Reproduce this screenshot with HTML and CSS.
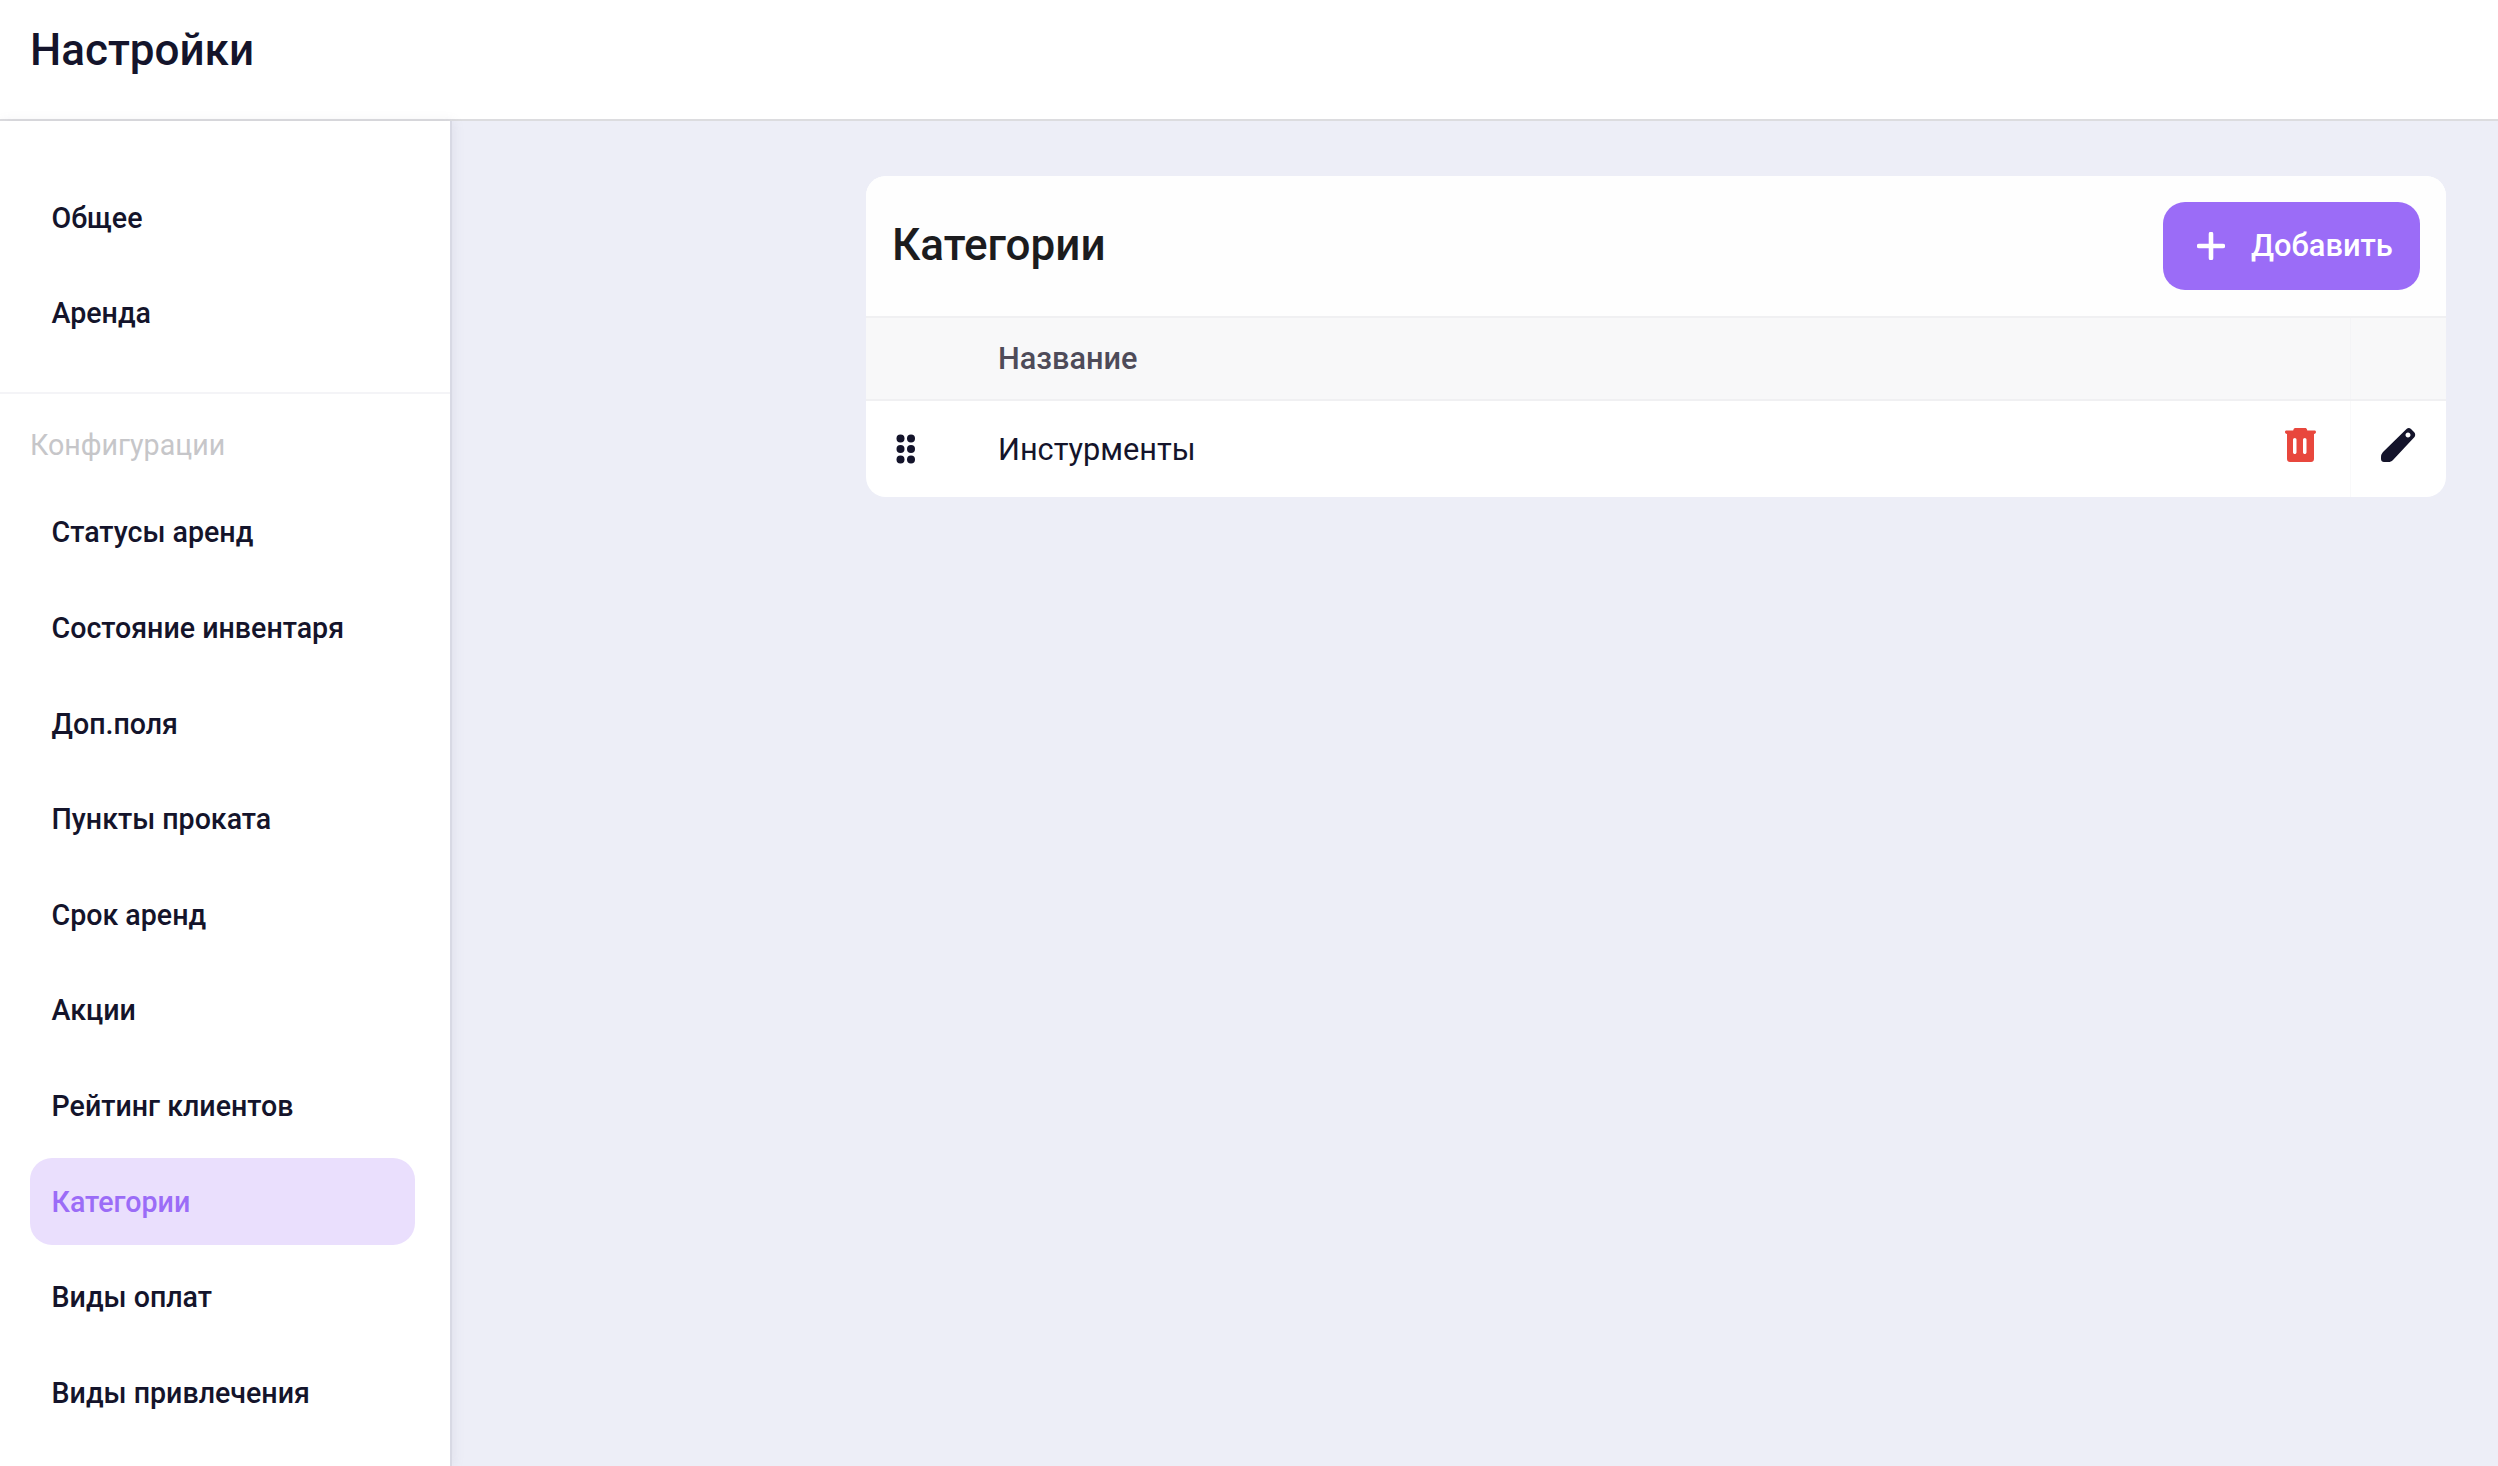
FILE: index.html
```html
<!DOCTYPE html>
<html lang="ru">
<head>
<meta charset="utf-8">
<title>Настройки</title>
<link rel="stylesheet" href="styles.css">
</head>
<body>
<header class="topbar"><h1 class="page-title">Настройки</h1></header>
<div class="layout">
  <nav class="sidebar">
    <ul class="menu menu-top">
      <li class="menu-item">Общее</li>
      <li class="menu-item">Аренда</li>
    </ul>
    <div class="menu-group">
      <div class="group-label">Конфигурации</div>
      <ul class="menu">
        <li class="menu-item">Статусы аренд</li>
        <li class="menu-item">Состояние инвентаря</li>
        <li class="menu-item">Доп.поля</li>
        <li class="menu-item">Пункты проката</li>
        <li class="menu-item">Срок аренд</li>
        <li class="menu-item">Акции</li>
        <li class="menu-item">Рейтинг клиентов</li>
        <li class="menu-item active">Категории</li>
        <li class="menu-item">Виды оплат</li>
        <li class="menu-item">Виды привлечения</li>
      </ul>
    </div>
  </nav>
  <main class="content">
    <section class="card">
      <div class="card-head">
        <h2 class="card-title">Категории</h2>
        <button class="add-btn" type="button">
          <svg class="plus" viewBox="0 0 28 28" width="28" height="28"><path d="M14 2v24M2 14h24"/></svg>
          <span class="add-label">Добавить</span>
        </button>
      </div>
      <div class="row thead">
        <div class="cell-drag"></div>
        <div class="cell-name">Название</div>
        <div class="cell-del"></div>
        <div class="cell-edit"></div>
      </div>
      <div class="row tbody">
        <div class="cell-drag">
          <svg viewBox="0 0 19 30" width="19" height="30" class="dots"><circle cx="4.5" cy="4.5" r="4"/><circle cx="15" cy="4.5" r="4"/><circle cx="4.5" cy="15" r="4"/><circle cx="15" cy="15" r="4"/><circle cx="4.5" cy="25.5" r="4"/><circle cx="15" cy="25.5" r="4"/></svg>
        </div>
        <div class="cell-name">Инстурменты</div>
        <div class="cell-del">
          <svg viewBox="0 0 31 34" width="31" height="34" class="trash"><path fill-rule="evenodd" d="M8.500 1.500C8.800.5 9.500 0 10.500 0H20C21 0 21.700.5 22 1.500L22.300 2.500H29.500C30.400 2.500 31 3.200 31 4S30.400 5.800 29 6V31C29 32.700 27.700 34 26 34H5C3.300 34 2 32.700 2 31V6C.6 5.800 0 5 0 4S.6 2.500 1.500 2.500H8.200ZM9.800 10C8.800 10 8 10.800 8 11.800V24.200C8 25.200 8.800 26 9.800 26S11.500 25.200 11.500 24.200V11.800C11.500 10.800 10.800 10 9.800 10ZM19.800 10C18.800 10 18 10.800 18 11.800V24.200C18 25.200 18.800 26 19.800 26S21.500 25.200 21.500 24.200V11.800C21.500 10.800 20.800 10 19.800 10Z"/></svg>
        </div>
        <div class="cell-edit">
          <svg viewBox="0 0 35 34" width="35" height="34" class="pencil"><path fill-rule="evenodd" d="M25.500 1C27-.2 28.500-.2 30 1L33 4C34.500 5.500 34.500 7.500 33.500 9L12 32C10.500 33.500 9 34 7.500 34H3C1.300 34 0 32.700 0 31V29C0 27 .8 25.500 2 24ZM27 4.500C25.600 4.500 24.500 5.600 24.500 7S25.600 9.500 27 9.500 29.500 8.400 29.500 7 28.400 4.500 27 4.500Z"/></svg>
        </div>
      </div>
    </section>
  </main>
</div>
</body>
</html>
```

FILE: styles.css
```css
* { box-sizing: border-box; }
html, body { margin: 0; height: 100%; overflow: hidden; }
body {
  font-family: Roboto, "Noto Sans", sans-serif;
  color: #14142b;
  background: #edeef7;
  display: flex;
  flex-direction: column;
}
.topbar {
  height: 121px;
  flex: none;
  background: #fff;
  border-bottom: 2px solid #dcdcdf;
  display: flex;
  align-items: center;
  padding: 0 0 18px 30px;
}
.page-title { margin: 0; font-size: 44px; font-weight: 500; line-height: 1.2; color: #14142b; }
.layout { flex: 1; display: flex; min-height: 0; }
.sidebar {
  width: 452px;
  flex: none;
  background: #fff;
  border-right: 2px solid #d8d9e4;
  box-shadow: 2px 0 10px rgba(130, 130, 160, .12);
  overflow: hidden;
  padding-top: 53px;
}
.menu { list-style: none; margin: 0; padding: 0 35px 0 30px; display: flex; flex-direction: column; gap: 8.6px; }
.menu-top { padding-bottom: 35px; border-bottom: 2px solid #f4f4f7; }
.menu-group { padding-top: 30.4px; }
.group-label { padding: 0 30px; font-size: 28.6px; line-height: 42px; color: #c6c6c9; margin-bottom: 23px; }
.menu-item {
  height: 87px;
  display: flex;
  align-items: center;
  padding: 0 21.5px;
  border-radius: 22px;
  font-size: 28.6px;
  font-weight: 500;
  flex: none;
}
.menu-item.active { background: #eadffd; color: #9b6cf7; }
.content { flex: 1; min-width: 0; padding: 55px 52px 0 0; display: flex; justify-content: flex-end; align-items: flex-start; }
.card { width: 1580px; background: #fff; border-radius: 20px; overflow: hidden; }
.card-head { height: 140px; display: flex; align-items: center; justify-content: space-between; padding: 0 26px; background: #fefefe; }
.card-title { margin: 0 0 2px; font-size: 44px; font-weight: 500; color: #1c1c1e; }
.add-btn {
  width: 257px;
  height: 88px;
  border: 0;
  border-radius: 22px;
  background: #9b6cf7;
  color: #fff;
  font: 500 30.8px Roboto, sans-serif;
  display: flex;
  align-items: center;
  padding: 0 0 0 34px;
  gap: 26px;
}
.add-label { margin-bottom: 1px; }
.plus { fill: none; stroke: #fff; stroke-width: 4.6; stroke-linecap: round; }
.row { display: grid; grid-template-columns: 132px 1fr 96px 96px; align-items: stretch; }
.row > div { display: flex; align-items: center; }
.thead { height: 85px; background: #f8f8f9; border-top: 2px solid #f0f0f2; border-bottom: 2px solid #f0f0f2; font-size: 30.7px; font-weight: 500; color: #4e4b59; }
.tbody { height: 96px; font-size: 30.7px; color: #14142b; }
.cell-edit { justify-content: center; }
.thead .cell-edit { border-left: 1px solid #f4f4f6; }
.tbody .cell-edit { border-left: 1px solid #f9f9fa; }
.cell-del { justify-content: center; }
.cell-drag { padding-left: 30px; }
.dots { fill: #14142b; }
.trash { fill: #e8473d; margin: 0 3px 8px 0; }
.pencil { fill: #14142b; margin-bottom: 8px; }
```
